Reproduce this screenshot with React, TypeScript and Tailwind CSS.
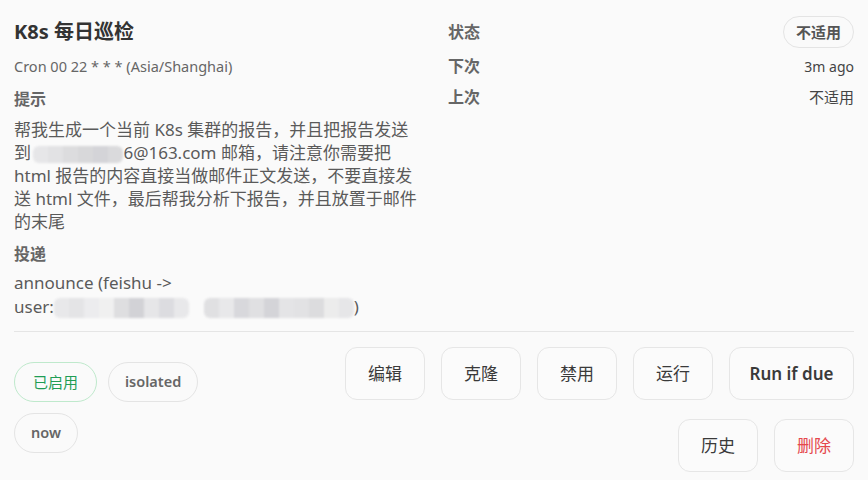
import type { ReactNode } from "react";

const font = "font-['Noto_Sans','Noto_Sans_CJK_SC',sans-serif]";

// redacted bits in the screenshot: pixelated grey blocks
const Mosaic = ({ cells, className }: { cells: string[]; className?: string }) => (
  <span className={`inline-flex align-middle overflow-hidden rounded-md blur-[1px] ${className ?? ""}`}>
    {cells.map((c, i) => (
      <span key={i} className="w-[15px] h-full" style={{ background: c }} />
    ))}
  </span>
);

const Pill = ({ children, green }: { children: ReactNode; green?: boolean }) => (
  <span
    className={
      green
        ? "h-10 px-[18px] flex items-center rounded-full border border-[#bfe9cc] text-[15px] text-[#1f9d55]"
        : "h-10 px-4 flex items-center rounded-full border border-[#e4e4e4] text-[14.5px] font-semibold text-[#666]"
    }
  >
    {children}
  </span>
);

const Btn = ({ children, danger, wide }: { children: ReactNode; danger?: boolean; wide?: boolean }) => (
  <button
    className={`h-[53px] ${wide ? "w-[125px] font-semibold" : "w-20"} rounded-[12px] border border-[#e6e6e6] bg-[#fbfbfb] text-[17px] ${
      danger ? "text-[#e5484d]" : "text-[#3a3a3a]"
    }`}
  >
    {children}
  </button>
);

const Row = ({ label, children, className }: { label: string; children: ReactNode; className?: string }) => (
  <div className={`flex items-center justify-between ${className ?? ""}`}>
    <span className="text-[16px] font-bold text-[#666]">{label}</span>
    {children}
  </div>
);

export default function App() {
  return (
    <div className={`w-[868px] h-[480px] bg-[#fafafa] px-[14px] pt-4 overflow-hidden ${font}`}>
      <div className="grid grid-cols-2 gap-7">
        <div>
          <h1 className="text-[20px] leading-8 font-bold text-[#333]">K8s 每日巡检</h1>
          <p className="mt-2 text-[14.5px] leading-5 text-[#666]">Cron 00 22 * * * (Asia/Shanghai)</p>
          <h2 className="mt-3 text-[16px] leading-[22px] font-bold text-[#666]">提示</h2>
          <p className="mt-2 text-[17px] leading-[23px] text-[#5a5a5a]">
            帮我生成一个当前 K8s 集群的报告，并且把报告发送到{" "}
            <Mosaic
              className="h-[17px] -ml-[2px]"
              cells={["#e6e6e8", "#e2e2e4", "#dcdcde", "#d8d8da", "#d4d4d8", "#dadadc"]}
            />
            6@163.com 邮箱，请注意你需要把 html 报告的内容直接当做邮件正文发送，不要直接发送 html 文件，最后帮我分析下报告，并且放置于邮件的末尾
          </p>
          <h2 className="mt-[10px] text-[16px] leading-[22px] font-bold text-[#666]">投递</h2>
          <p className="mt-[6px] text-[17px] leading-6 text-[#5a5a5a]">
            announce (feishu -&gt;
            <br />
            user:
            <Mosaic
              className="h-5"
              cells={["#e8e8ea", "#e4e4e6", "#ececee", "#f0f0f0", "#dedee0", "#d2d2d6", "#e6e6e8", "#dcdce0", "#e8e8ea"]}
            />
            <Mosaic
              className="h-5 ml-[15px]"
              cells={["#e0e0e2", "#e8e8ea", "#d8d8dc", "#e0e0e2", "#d4d4d8", "#e4e4e6", "#e2e2e4", "#dcdcde", "#ececec", "#e6e6e8"]}
            />
            )
          </p>
        </div>
        <div>
          <Row label="状态" className="h-8">
            <span className="h-8 px-3 flex items-center rounded-full border border-[#e4e4e4] text-[15px] font-bold text-[#555]">
              不适用
            </span>
          </Row>
          <Row label="下次" className="mt-2 h-5">
            <span className="text-[14px] text-[#444]">3m ago</span>
          </Row>
          <Row label="上次" className="mt-[11px] h-5">
            <span className="text-[15px] text-[#444]">不适用</span>
          </Row>
        </div>
      </div>

      <div className="mt-3 border-t border-[#e5e5e5] pt-[15px] flex justify-between items-start">
        <div className="mt-[15px] w-[200px] flex flex-wrap gap-[11px]">
          <Pill green>已启用</Pill>
          <Pill>isolated</Pill>
          <Pill>now</Pill>
        </div>
        <div className="w-[512px] flex flex-wrap justify-end gap-x-4 gap-y-[19px]">
          <Btn>编辑</Btn>
          <Btn>克隆</Btn>
          <Btn>禁用</Btn>
          <Btn>运行</Btn>
          <Btn wide>Run if due</Btn>
          <Btn>历史</Btn>
          <Btn danger>删除</Btn>
        </div>
      </div>
    </div>
  );
}
